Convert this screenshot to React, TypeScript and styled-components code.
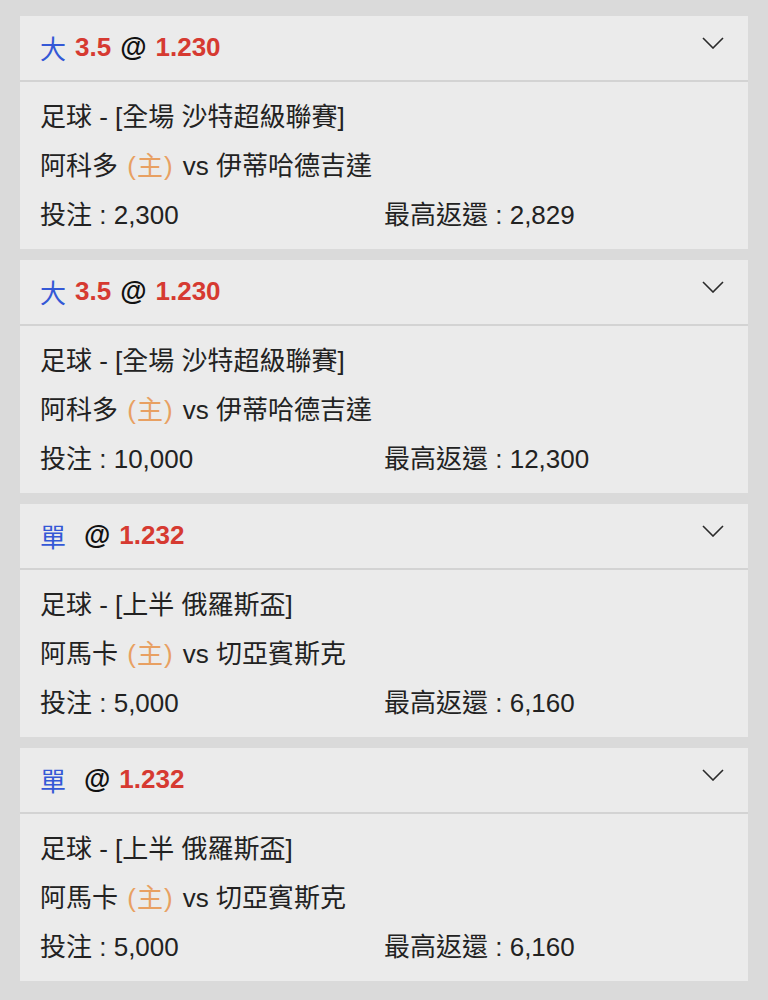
import React from 'react';
import styled, { createGlobalStyle } from 'styled-components';

const GlobalStyle = createGlobalStyle`
  html, body {
    margin: 0;
    padding: 0;
    background: #dadada;
  }
  body {
    font-family: 'Liberation Sans', 'Noto Sans CJK TC', Arial, sans-serif;
    color: #222;
  }
`;

interface Bet {
  pick: string;
  handicap?: string;
  odds: string;
  league: string;
  home: string;
  away: string;
  stake: string;
  maxReturn: string;
}

const bets: Bet[] = [
  {
    pick: '大',
    handicap: '3.5',
    odds: '1.230',
    league: '足球 - [全場 沙特超級聯賽]',
    home: '阿科多',
    away: '伊蒂哈德吉達',
    stake: '2,300',
    maxReturn: '2,829',
  },
  {
    pick: '大',
    handicap: '3.5',
    odds: '1.230',
    league: '足球 - [全場 沙特超級聯賽]',
    home: '阿科多',
    away: '伊蒂哈德吉達',
    stake: '10,000',
    maxReturn: '12,300',
  },
  {
    pick: '單',
    odds: '1.232',
    league: '足球 - [上半 俄羅斯盃]',
    home: '阿馬卡',
    away: '切亞賓斯克',
    stake: '5,000',
    maxReturn: '6,160',
  },
  {
    pick: '單',
    odds: '1.232',
    league: '足球 - [上半 俄羅斯盃]',
    home: '阿馬卡',
    away: '切亞賓斯克',
    stake: '5,000',
    maxReturn: '6,160',
  },
];

const Page = styled.div`
  display: flex;
  flex-direction: column;
  gap: 11px;
  padding: 16px 20px;
`;

const Card = styled.div`
  background: #ebebeb;
  display: flex;
  flex-direction: column;
`;

const Header = styled.div`
  height: 64px;
  display: flex;
  align-items: center;
  justify-content: space-between;
  padding: 0 24px 0 20px;
  border-bottom: 2px solid #d3d3d3;
  box-sizing: content-box;
`;

const Title = styled.div`
  display: flex;
  align-items: center;
  gap: 9px;
  font-size: 26px;
  font-weight: bold;
  margin-top: -1px;
`;

const Pick = styled.span`
  color: #3458d6;
  font-weight: normal;
  font-family: 'Noto Sans CJK TC', sans-serif;
`;

const Red = styled.span`
  color: #d63a31;
`;

const At = styled.span`
  color: #111;
  font-size: 27px;
`;

const Chevron = styled.svg`
  width: 22px;
  height: 12px;
  margin-top: -11px;
`;

const Body = styled.div`
  padding: 11px 20px 9px;
  font-size: 26px;
  line-height: 49px;
`;

const Line = styled.div`
  white-space: nowrap;
`;

const Home = styled.span`
  color: #e8a062;
  letter-spacing: 1px;
  margin: 0 2px;
`;

const Amounts = styled.div`
  display: grid;
  grid-template-columns: 1fr 1fr;
`;

const BetCard: React.FC<{ bet: Bet }> = ({ bet }) => (
  <Card>
    <Header>
      <Title>
        <Pick>{bet.pick}</Pick>
        <Red>{bet.handicap ?? ''}</Red>
        <At>@</At>
        <Red>{bet.odds}</Red>
      </Title>
      <Chevron viewBox="0 0 22 12" fill="none">
        <path d="M1 1 L11 11 L21 1" stroke="#2a2a2a" strokeWidth="1.6" />
      </Chevron>
    </Header>
    <Body>
      <Line>{bet.league}</Line>
      <Line>
        {bet.home} <Home>(主)</Home> vs {bet.away}
      </Line>
      <Amounts>
        <Line>投注 : {bet.stake}</Line>
        <Line>最高返還 : {bet.maxReturn}</Line>
      </Amounts>
    </Body>
  </Card>
);

const App: React.FC = () => (
  <>
    <GlobalStyle />
    <Page>
      {bets.map((bet, i) => (
        <BetCard key={i} bet={bet} />
      ))}
    </Page>
  </>
);

export default App;
